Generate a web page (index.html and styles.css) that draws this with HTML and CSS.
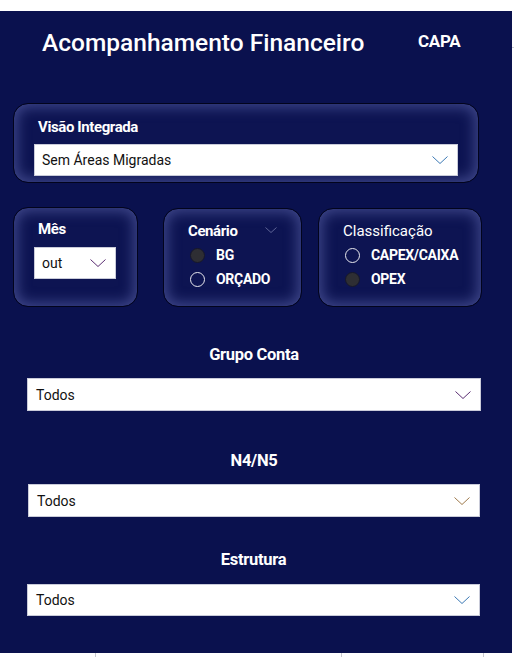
FILE: index.html
```html
<!DOCTYPE html>
<html lang="pt">
<head>
<meta charset="utf-8">
<title>Acompanhamento Financeiro</title>
<link rel="stylesheet" href="styles.css">
</head>
<body>
<div class="stage">
  <main class="panel">
    <header class="header">
      <h1 class="title">Acompanhamento Financeiro</h1>
      <div class="capa">CAPA</div>
    </header>

    <section class="card card-visao">
      <div class="card-label">Visão Integrada</div>
      <div class="dropdown dd-visao">
        <span class="dd-text">Sem Áreas Migradas</span>
        <svg class="chev chev-blue" viewBox="0 0 16 8" width="16" height="8"><path d="M0.5 0.5 L8 7.5 L15.5 0.5" fill="none" stroke="currentColor" stroke-width="1"/></svg>
      </div>
    </section>

    <div class="cards-row">
      <section class="card card-mes">
        <div class="card-label">Mês</div>
        <div class="dropdown dd-mes">
          <span class="dd-text">out</span>
          <svg class="chev chev-purple" viewBox="0 0 16 8" width="16" height="8"><path d="M0.5 0.5 L8 7.5 L15.5 0.5" fill="none" stroke="currentColor" stroke-width="1"/></svg>
        </div>
      </section>

      <section class="card card-cenario">
        <div class="card-head">
          <div class="card-label">Cenário</div>
          <svg class="mini-chev" viewBox="0 0 12 6" width="12" height="6"><path d="M0.5 0.5 L6 5.5 L11.5 0.5" fill="none" stroke="currentColor" stroke-width="1"/></svg>
        </div>
        <div class="radio-list">
          <div class="radio-row"><span class="radio on"></span><span class="radio-text">BG</span></div>
          <div class="radio-row"><span class="radio"></span><span class="radio-text">ORÇADO</span></div>
        </div>
      </section>

      <section class="card card-class">
        <div class="card-label regular">Classificação</div>
        <div class="radio-list">
          <div class="radio-row"><span class="radio"></span><span class="radio-text">CAPEX/CAIXA</span></div>
          <div class="radio-row"><span class="radio on"></span><span class="radio-text">OPEX</span></div>
        </div>
      </section>
    </div>

    <section class="filter f-grupo">
      <div class="filter-label">Grupo Conta</div>
      <div class="dropdown dd-wide">
        <span class="dd-text">Todos</span>
        <svg class="chev chev-purple" viewBox="0 0 16 8" width="16" height="8"><path d="M0.5 0.5 L8 7.5 L15.5 0.5" fill="none" stroke="currentColor" stroke-width="1"/></svg>
      </div>
    </section>

    <section class="filter f-n4">
      <div class="filter-label">N4/N5</div>
      <div class="dropdown dd-wide dd-n4">
        <span class="dd-text">Todos</span>
        <svg class="chev chev-brown" viewBox="0 0 16 8" width="16" height="8"><path d="M0.5 0.5 L8 7.5 L15.5 0.5" fill="none" stroke="currentColor" stroke-width="1"/></svg>
      </div>
    </section>

    <section class="filter f-est">
      <div class="filter-label">Estrutura</div>
      <div class="dropdown dd-wide dd-est">
        <span class="dd-text">Todos</span>
        <svg class="chev chev-blue" viewBox="0 0 16 8" width="16" height="8"><path d="M0.5 0.5 L8 7.5 L15.5 0.5" fill="none" stroke="currentColor" stroke-width="1"/></svg>
      </div>
    </section>
  </main>
  <div class="side"><div class="tick"></div></div>
</div>
<div class="footer">
  <div class="seg seg1"></div>
  <div class="seg seg2"></div>
  <div class="seg seg3"></div>
</div>
</body>
</html>
```

FILE: styles.css
```css
html, body {
  margin: 0;
  padding: 0;
  background: #ffffff;
}

body {
  width: 514px;
  height: 657px;
  overflow: hidden;
  font-family: Roboto, "Noto Sans", "DejaVu Sans", sans-serif;
  color: #ffffff;
}

.stage {
  display: flex;
  margin-top: 11px;
}

.panel {
  width: 512px;
  height: 642px;
  background: #0a114e;
  box-sizing: border-box;
  display: flex;
  flex-direction: column;
}

.side {
  width: 2px;
}

.tick {
  margin-top: 36px;
  height: 1px;
  background: #cfd0d6;
}

.header {
  display: grid;
  grid-template-columns: 376px auto;
  padding: 17px 0 0 42px;
  height: 75px;
  box-sizing: border-box;
}

.title {
  margin: 0;
  font-size: 24.5px;
  font-weight: 500;
  line-height: 30px;
  letter-spacing: 0;
}

.capa {
  font-size: 17px;
  font-weight: 700;
  line-height: 22px;
  margin-top: 2px;
  letter-spacing: -0.3px;
}

.card {
  box-sizing: border-box;
  border: 1px solid #02041c;
  border-radius: 15px;
  background: #0d1452;
  box-shadow: inset 0 0 14px 3px rgba(105, 115, 185, 0.55);
}

.card-label {
  font-size: 15px;
  font-weight: 700;
  line-height: 20px;
  letter-spacing: -0.4px;
}

.card-label.regular {
  font-weight: 400;
  letter-spacing: 0;
}

.card-visao {
  margin: 17px 0 0 13px;
  width: 466px;
  height: 80px;
  padding: 13px 20px 0 20px;
}

.card-visao .card-label {
  padding-left: 4px;
}

.dropdown {
  background: #ffffff;
  border: 1px solid #c9cbd9;
  box-sizing: border-box;
  height: 32px;
  display: flex;
  align-items: center;
  justify-content: space-between;
  padding: 0 9px 0 7px;
  color: #111111;
}

.dd-text {
  font-size: 14px;
  line-height: 20px;
}

.dd-visao {
  margin-top: 7px;
  width: 424px;
}

.chev {
  display: block;
  flex: none;
}

.chev-blue { color: #3b78b4; }
.chev-purple { color: #5b2d72; }
.chev-brown { color: #9e7a4c; }

.cards-row {
  display: flex;
  align-items: flex-start;
  margin: 24px 0 0 13px;
}

.card-mes {
  width: 125px;
  height: 100px;
  padding: 11px 0 0 20px;
}

.card-mes .card-label {
  padding-left: 4px;
}

.dd-mes {
  margin-top: 8px;
  width: 82px;
}

.card-cenario {
  margin-left: 25px;
  margin-top: 1px;
  width: 139px;
  height: 99px;
  padding: 12px 0 0 24px;
}

.card-head {
  display: flex;
  align-items: center;
  justify-content: space-between;
  width: 89px;
}

.mini-chev {
  display: block;
  color: #5e6496;
  margin-top: -2px;
}

.card-class {
  margin-left: 16px;
  margin-top: 1px;
  width: 164px;
  height: 99px;
  padding: 12px 0 0 24px;
}

.radio-list {
  display: flex;
  flex-direction: column;
  margin-top: 2px;
  margin-left: 2px;
}

.radio-row {
  display: flex;
  align-items: center;
  height: 24px;
}

.radio {
  width: 15px;
  height: 15px;
  box-sizing: border-box;
  border-radius: 50%;
  border: 1.5px solid #e8e8ee;
  flex: none;
}

.radio.on {
  background: #2e2e33;
  border-color: #16172a;
}

.radio-text {
  margin-left: 11px;
  font-size: 14px;
  font-weight: 700;
  letter-spacing: -0.3px;
  line-height: 20px;
}

.filter {
  display: flex;
  flex-direction: column;
  align-items: center;
  width: 454px;
  margin-left: 27px;
}

.filter-label {
  font-size: 16.5px;
  font-weight: 700;
  line-height: 20px;
  letter-spacing: -0.3px;
}

.filter .dropdown {
  margin-top: 13px;
  align-self: stretch;
  padding: 0 9px 0 8px;
}

.f-grupo {
  margin-top: 38px;
}

.f-grupo .dropdown {
  height: 33px;
}

.f-n4 {
  margin-top: 40px;
  margin-left: 28px;
  width: 452px;
}

.f-n4 .dropdown {
  height: 33px;
}

.f-est {
  margin-top: 33px;
  width: 453px;
}

.f-est .dropdown {
  margin-top: 14px;
}

.footer {
  display: flex;
  height: 4px;
}

.seg {
  height: 4px;
  border-right: 1px solid #c8c9cf;
  box-sizing: border-box;
}

.seg1 { width: 96px; }
.seg2 { width: 246px; }
.seg3 { width: 142px; }
```
